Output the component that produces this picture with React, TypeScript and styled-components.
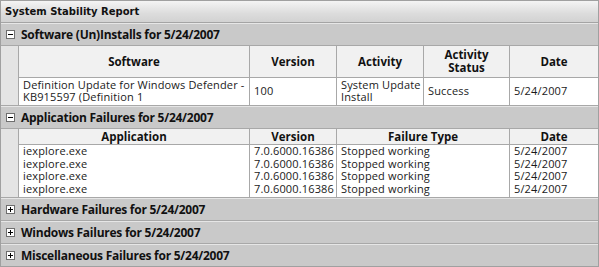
import React from "react";
import styled, { createGlobalStyle } from "styled-components";

const GlobalStyle = createGlobalStyle`
  html, body {
    margin: 0;
    padding: 0;
    background: #ffffff;
  }
  body {
    font-family: "Open Sans", "Noto Sans", sans-serif;
  }
`;

const Report = styled.div`
  width: 599px;
  height: 267px;
  box-sizing: border-box;
  border: 1px solid #a0a0a0;
  background: #c9c9c9;
  display: flex;
  flex-direction: column;
  overflow: hidden;
`;

const TitleBar = styled.div`
  height: 21px;
  flex: none;
  display: flex;
  align-items: center;
  padding-left: 4px;
  background: linear-gradient(#f4f4f4, #dcdcdc 60%, #d2d2d2);
  border-bottom: 1px solid #a4a4a4;
  font-family: "DejaVu Sans", sans-serif;
  font-weight: bold;
  font-size: 10px;
  color: #111;
`;

const SectionHeader = styled.div`
  height: 21px;
  flex: none;
  display: flex;
  align-items: center;
  gap: 6px;
  padding-left: 5px;
  background: #c9c9c9;
  border-top: 1px solid #e6e6e6;
  border-bottom: 1px solid #a8a8a8;
  font-family: "Open Sans", sans-serif;
  font-weight: bold;
  font-size: 12px;
  letter-spacing: -0.25px;
  color: #111;
`;

const Toggle = styled.span<{ open?: boolean }>`
  width: 9px;
  height: 9px;
  box-sizing: border-box;
  border: 1px solid #6e6e6e;
  background: #fff;
  position: relative;
  flex: none;

  &::before,
  &::after {
    content: "";
    position: absolute;
    background: #000;
  }
  &::before {
    left: 1px;
    top: 3px;
    width: 5px;
    height: 1px;
  }
  &::after {
    display: ${(p) => (p.open ? "none" : "block")};
    left: 3px;
    top: 1px;
    width: 1px;
    height: 5px;
  }
`;

const Body = styled.div`
  flex: none;
  padding-left: 17px;
  background: #e4e4e4;
  border-bottom: 1px solid #a8a8a8;
`;

const Table = styled.table`
  width: 580px;
  border-collapse: collapse;
  table-layout: fixed;
  background: #fff;
  font-family: "Open Sans", sans-serif;
  font-size: 11px;
  letter-spacing: 0.15px;
  color: #1a1a1a;
`;

const Th = styled.th`
  background: #f1f1f1;
  border: 1px solid #a8a8a8;
  border-top: none;
  font-weight: bold;
  font-size: 11.5px;
  letter-spacing: 0;
  line-height: 13px;
  color: #111;
  padding: 1px 3px;
  text-align: center;
  vertical-align: middle;
`;

const Td = styled.td<{ tight?: boolean }>`
  border-left: 1px solid #a8a8a8;
  border-right: 1px solid #a8a8a8;
  border-top: ${(p) => (p.tight ? "none" : "1px solid #a8a8a8")};
  padding: ${(p) => (p.tight ? "0 4px" : "1px 4px")};
  line-height: 12.5px;
  height: ${(p) => (p.tight ? "12.5px" : "auto")};
  text-align: left;
  vertical-align: middle;
  white-space: nowrap;
`;

const WrapTd = styled(Td)`
  white-space: normal;
`;

const Spacer = styled.tr`
  height: 2px;
  td {
    border-left: 1px solid #a8a8a8;
    border-right: 1px solid #a8a8a8;
    padding: 0;
  }
`;

const apps = Array.from({ length: 4 }, () => ({
  name: "iexplore.exe",
  version: "7.0.6000.16386",
  type: "Stopped working",
  date: "5/24/2007",
}));

const collapsed = [
  "Hardware Failures for 5/24/2007",
  "Windows Failures for 5/24/2007",
  "Miscellaneous Failures for 5/24/2007",
];

export default function App() {
  return (
    <>
      <GlobalStyle />
      <Report>
        <TitleBar>System Stability Report</TitleBar>

        <SectionHeader>
          <Toggle open />
          Software (Un)Installs for 5/24/2007
        </SectionHeader>
        <Body>
          <Table>
            <colgroup>
              <col style={{ width: 231 }} />
              <col style={{ width: 87 }} />
              <col style={{ width: 87 }} />
              <col style={{ width: 86 }} />
              <col style={{ width: 89 }} />
            </colgroup>
            <thead>
              <tr style={{ height: 31 }}>
                <Th>Software</Th>
                <Th>Version</Th>
                <Th>Activity</Th>
                <Th>
                  Activity
                  <br />
                  Status
                </Th>
                <Th>Date</Th>
              </tr>
            </thead>
            <tbody>
              <tr style={{ height: 28 }}>
                <WrapTd>
                  Definition Update for Windows Defender - KB915597 (Definition 1
                </WrapTd>
                <Td>100</Td>
                <Td>
                  System Update
                  <br />
                  Install
                </Td>
                <Td>Success</Td>
                <Td>5/24/2007</Td>
              </tr>
            </tbody>
          </Table>
        </Body>

        <SectionHeader>
          <Toggle open />
          Application Failures for 5/24/2007
        </SectionHeader>
        <Body>
          <Table>
            <colgroup>
              <col style={{ width: 231 }} />
              <col style={{ width: 87 }} />
              <col style={{ width: 173 }} />
              <col style={{ width: 89 }} />
            </colgroup>
            <thead>
              <tr style={{ height: 15 }}>
                <Th>Application</Th>
                <Th>Version</Th>
                <Th>Failure Type</Th>
                <Th>Date</Th>
              </tr>
            </thead>
            <tbody>
              {apps.map((a, i) => (
                <tr key={i}>
                  <Td tight>{a.name}</Td>
                  <Td tight>{a.version}</Td>
                  <Td tight>{a.type}</Td>
                  <Td tight>{a.date}</Td>
                </tr>
              ))}
              <Spacer>
                <td />
                <td />
                <td />
                <td />
              </Spacer>
            </tbody>
          </Table>
        </Body>

        {collapsed.map((label) => (
          <SectionHeader key={label}>
            <Toggle />
            {label}
          </SectionHeader>
        ))}
      </Report>
    </>
  );
}
